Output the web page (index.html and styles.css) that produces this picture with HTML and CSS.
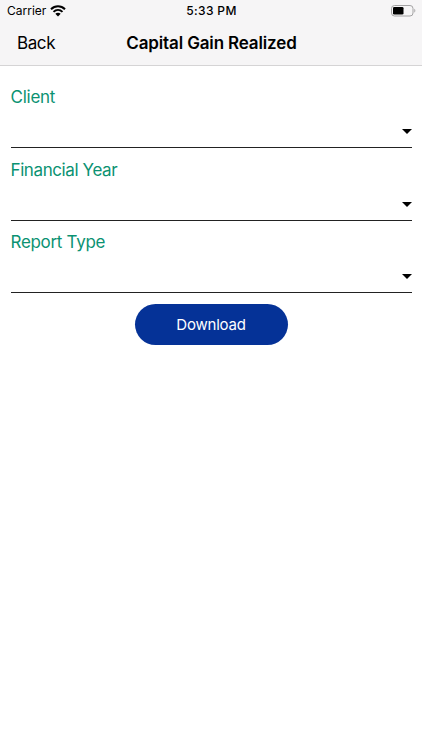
FILE: index.html
```html
<!DOCTYPE html>
<html lang="en">
<head>
<meta charset="utf-8">
<title>Capital Gain Realized</title>
<link rel="stylesheet" href="styles.css">
</head>
<body>
<header class="header">
  <div class="status">
    <div class="carrier"><span>Carrier</span>
      <svg class="wifi" viewBox="0 0 16 12"><path d="M1 4.3C5 .3 11 .3 15 4.3M3.5 6.9c2.6-2.5 6.4-2.5 9 0" fill="none" stroke="#000" stroke-width="2"/><path d="M5.3 8.8c1.6-1.4 3.8-1.4 5.4 0L8 11.5z"/></svg>
    </div>
    <div class="time">5:33 PM</div>
    <svg class="battery" viewBox="0 0 25 12"><rect x=".5" y=".5" width="21.5" height="10.5" rx="3" fill="none" stroke="#a3a2a3"/><rect x="2" y="2" width="10.5" height="7.5" rx="1.3"/><path d="M23.3 3.8c1.4.6 1.4 3.3 0 3.9z" fill="#a3a2a3"/></svg>
  </div>
  <nav class="nav">
    <span class="back">Back</span>
    <h1 class="title">Capital Gain Realized</h1>
  </nav>
</header>
<main class="form">
  <div class="field">
    <span class="label client">Client</span>
    <div class="select"><svg class="caret" viewBox="0 0 10 5"><path d="M0 0h10L5 5z"/></svg></div>
  </div>
  <div class="field">
    <span class="label year">Financial Year</span>
    <div class="select"><svg class="caret" viewBox="0 0 10 5"><path d="M0 0h10L5 5z"/></svg></div>
  </div>
  <div class="field">
    <span class="label type">Report Type</span>
    <div class="select"><svg class="caret" viewBox="0 0 10 5"><path d="M0 0h10L5 5z"/></svg></div>
  </div>
  <button class="download">Download</button>
</main>
</body>
</html>
```
FILE: styles.css
```css
* { box-sizing: border-box; }
body {
  margin: 0;
  background: #fff;
  color: #000;
  font-family: Inter, "Liberation Sans", sans-serif;
}
.header {
  height: 66px;
  background: #f6f5f6;
  border-bottom: 1px solid #d5d4d5;
}
.status {
  display: grid;
  grid-template-columns: 1fr auto 1fr;
  align-items: center;
  height: 21px;
  padding: 0 6px 0 7px;
}
.carrier {
  display: flex;
  align-items: center;
  gap: 4px;
  font-size: 12px;
}
.wifi { width: 16px; height: 12px; }
.time {
  font-size: 12px;
  font-weight: 500;
  letter-spacing: 0.35px;
}
.battery { width: 25px; height: 12px; justify-self: end; }
.nav {
  display: grid;
  grid-template-columns: 1fr auto 1fr;
  align-items: center;
  height: 44px;
  padding: 0 16px 0 17px;
}
.back { font-size: 17px; letter-spacing: -0.4px; }
.title {
  margin: 0;
  font-size: 17px;
  font-weight: 600;
  letter-spacing: -0.14px;
}
.form {
  display: flex;
  flex-direction: column;
  padding: 20px 10.5px 0;
}
.field {
  height: 72.6px;
  display: flex;
  flex-direction: column;
}
.label {
  height: 22px;
  font-size: 17px;
  line-height: 22px;
  letter-spacing: -0.4px;
  color: #0b9272;
  white-space: nowrap;
}
.client { letter-spacing: -0.25px; }
.type { letter-spacing: -0.3px; }
.select {
  display: flex;
  justify-content: flex-end;
  height: 40px;
  padding-top: 21px;
  border-bottom: 1px solid #222;
}
.caret { width: 10px; height: 5px; }
.download {
  align-self: center;
  width: 153px;
  height: 41px;
  border: 0;
  border-radius: 21px;
  background: #053297;
  color: #fff;
  font: 400 15px Inter, "Liberation Sans", sans-serif;
  letter-spacing: -0.2px;
}
```
